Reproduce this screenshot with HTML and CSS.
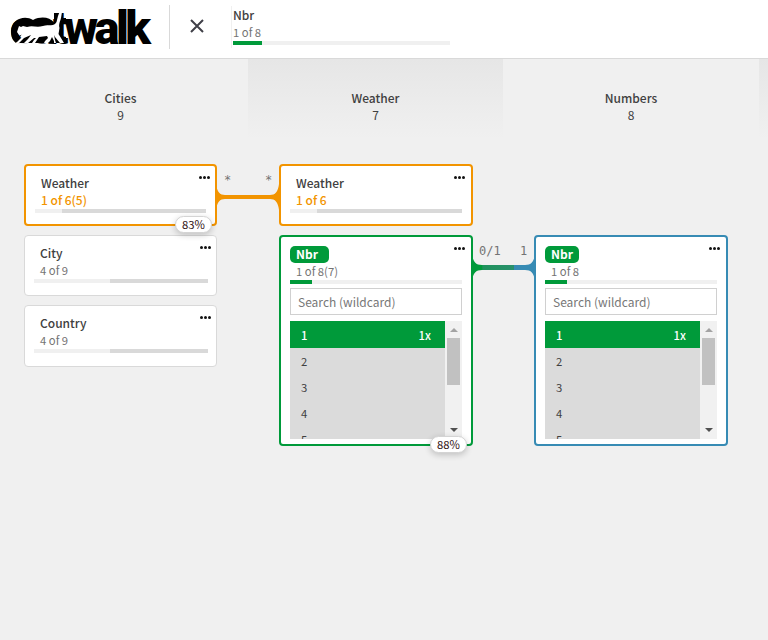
FILE: index.html
```html
<!DOCTYPE html>
<html lang="en">
<head>
<meta charset="utf-8">
<title>catwalk</title>
<link rel="stylesheet" href="styles.css">
</head>
<body>
<header class="topbar">
  <svg class="logo" width="160" height="58" viewBox="0 0 160 58">
    <g class="logo-text">
      <text x="10" y="43.5" textLength="45" lengthAdjust="spacingAndGlyphs">ca</text>
      <text x="53" y="43.5" textLength="13" lengthAdjust="spacingAndGlyphs">t</text>
      <text x="64" y="43.5" textLength="84.5">walk</text>
    </g>
    <path class="ink" d="M11 31C11 20 24 14 33 20C41 16 50 17 54 23L53 28L20 29L17 38L22 34L16 43C12 40 11 36 11 31Z"/>
    <path class="ink" d="M54 13H62V18H66V24H62V36L66 37V43H54Z"/>
    <path class="cat" d="M59.5 12H62L61 18C60 22 58.5 24 59.5 28L58.5 34L61 38L64 43L60 43L55 37L54 35L55 40L56 43L20 44L16 43L22 37L25 34L19 35L17 32L18 29L19 26L21 27L23 26L27 27C33 25 36 28 43 26C49 24 54 27 56.5 22L58 16Z"/>
    <path class="ink" d="M19 43L24 38L31 35L28 39L24 43ZM28 43L34 38H36L34 40L32 43ZM35 43L39 37L47 36L48 38L45 41L44 43ZM48 43L50 41L52 37L54 41V43Z"/>
  </svg>
  <div class="divider"></div>
  <svg class="clear" width="16" height="16" viewBox="0 0 16 16"><path d="M2 2L14 14M14 2L2 14"/></svg>
  <div class="selection">
    <div class="name">Nbr</div>
    <div class="count">1 of 8</div>
    <div class="bar"><i class="sel w29"></i></div>
  </div>
</header>
<main class="columns">
  <section class="column">
    <h2>Cities</h2><p class="total">9</p>
    <div class="cards">
      <article class="card thick orange">
        <span class="dots"><i></i><i></i><i></i></span>
        <div class="name">Weather</div><div class="count">1 of 6(5)</div>
        <div class="bar"><i class="alt from27"></i></div>
        <span class="badge">83%</span>
      </article>
      <article class="card">
        <span class="dots"><i></i><i></i><i></i></span>
        <div class="name">City</div><div class="count">4 of 9</div>
        <div class="bar"><i class="alt from76"></i></div>
      </article>
      <article class="card last">
        <span class="dots"><i></i><i></i><i></i></span>
        <div class="name">Country</div><div class="count">4 of 9</div>
        <div class="bar"><i class="alt from76"></i></div>
      </article>
    </div>
    <svg class="link first" width="64" height="36" viewBox="0 0 64 36">
      <path fill="#f29400" d="M0 6C1 14 4 17 9 17H54C59 17 62 14 63 6V32C62 24 59 21 54 21H9C4 21 1 24 0 32Z"/>
    </svg>
    <span class="card-num n1">*</span><span class="card-num n2">*</span>
  </section>
  <section class="column shade">
    <h2>Weather</h2><p class="total">7</p>
    <div class="cards">
      <article class="card thick orange">
        <span class="dots"><i></i><i></i><i></i></span>
        <div class="name">Weather</div><div class="count">1 of 6</div>
        <div class="bar"><i class="alt from27"></i></div>
      </article>
      <article class="card thick open green">
        <span class="dots"><i></i><i></i><i></i></span>
        <div class="pill">Nbr</div><div class="count">1 of 8(7)</div>
        <div class="bar"><i class="sel w22"></i></div>
        <div class="search">Search (wildcard)</div>
        <div class="listbox">
          <ul><li class="on"><span>1</span><span>1x</span></li><li>2</li><li>3</li><li>4</li><li>5</li></ul>
          <div class="scroll"><b class="up"></b><b class="thumb"></b><b class="down"></b></div>
        </div>
        <span class="badge">88%</span>
      </article>
    </div>
    <svg class="link second" width="64" height="36" viewBox="0 0 64 36">
      <defs><linearGradient id="blend"><stop offset="0" stop-color="#009a3a"/><stop offset=".16" stop-color="#009a3a"/><stop offset=".17" stop-color="#1f925c"/><stop offset=".66" stop-color="#29916c"/><stop offset=".67" stop-color="#378bb4"/><stop offset="1" stop-color="#378bb4"/></linearGradient></defs>
      <path fill="url(#blend)" d="M0 5C1 13 4 16 10 16H53C59 16 62 13 63 5V32C62 24 59 21 53 21H10C4 21 1 24 0 32Z"/>
    </svg>
    <span class="card-num n3">0/1</span><span class="card-num n4">1</span>
  </section>
  <section class="column">
    <h2>Numbers</h2><p class="total">8</p>
    <div class="cards">
      <div class="slot"></div>
      <article class="card thick open blue">
        <span class="dots"><i></i><i></i><i></i></span>
        <div class="pill">Nbr</div><div class="count">1 of 8</div>
        <div class="bar"><i class="sel w22"></i></div>
        <div class="search">Search (wildcard)</div>
        <div class="listbox">
          <ul><li class="on"><span>1</span><span>1x</span></li><li>2</li><li>3</li><li>4</li><li>5</li></ul>
          <div class="scroll"><b class="up"></b><b class="thumb"></b><b class="down"></b></div>
        </div>
      </article>
    </div>
  </section>
  <section class="column shade"></section>
</main>
</body>
</html>
```
FILE: styles.css
```css
* { box-sizing: border-box; }
body {
  margin: 0;
  height: 640px;
  overflow: hidden;
  background: #f0f0f0;
  color: #404040;
  font: 12px/17px "Noto Sans CJK SC", "Open Sans", sans-serif;
}
h2, p, ul { margin: 0; padding: 0; }
i, b { display: block; }

.topbar {
  display: flex;
  height: 59px;
  background: #fff;
  border-bottom: 1px solid #d9d9d9;
}
.logo-text { font: 900 47px Roboto, sans-serif; letter-spacing: -2.5px; }
.ink { fill: #000; }
.cat { fill: #fff; }
.divider { width: 1px; height: 44px; margin: 5px 0 0 9px; background: #d9d9d9; }
.clear { margin: 18px 0 0 18.5px; }
.clear path { stroke: #404048; stroke-width: 2; }
.selection { width: 219px; margin: 6px 0 0 26.5px; padding-left: 1px; height: 42px; border-left: 1px solid #f0f0f0; }
.name { font-weight: 500; }
.selection .count { height: 18px; line-height: 18px; color: #737373; font-size: 11.3px; }

.bar { height: 4px; background: #f0f0f0; }
.bar i { height: 100%; }
.sel { background: #009a3a; }
.alt { background: #d9d9d9; }
.w29 { width: 29px; }
.w22 { width: 22px; }
.from27 { margin-left: 27px; }
.from76 { margin-left: 76px; }

.columns { display: flex; height: 581px; margin-left: -7px; }
.column { position: relative; flex: 0 0 255px; padding-top: 30px; text-align: center; }
.column:nth-child(3) { flex-basis: 256px; }
.column:last-child { flex: 1 1 0; }
.shade { background: linear-gradient(#e6e6e6, #f0f0f0 80px); }
h2 { font-size: 12px; font-weight: 500; line-height: 17px; }
.cards { display: flex; flex-direction: column; gap: 9px; padding: 41px 30px 0 31px; text-align: left; }
.column:nth-child(3) .cards { padding-right: 31px; }
.column:first-child .cards { padding-right: 31px; }
.slot { height: 62px; }
.card {
  position: relative;
  height: 61px;
  padding: 8px 8px 0 9px;
  background: #fff;
  border: 1px solid #d9d9d9;
  border-radius: 4px;
}
.last { height: 62px; }
.card .name, .card .count { padding-left: 6px; }
.card .count { height: 18px; line-height: 18px; font-size: 11.3px; color: #737373; }
.thick { height: 62px; border-width: 2px; border-radius: 4px; }
.thick.orange { padding-right: 9px; }
.orange { border-color: #f29400; }
.card.orange .count { line-height: 17px; color: #f29400; font-weight: 500; font-size: 12px; }
.green { border-color: #009a3a; }
.blue { border-color: #378bb4; }
.card.open { height: 211px; padding: 9px 9px 0; }
.pill {
  width: 39px;
  height: 17px;
  padding-left: 6px;
  background: #009a3a;
  border-radius: 5px;
  color: #fff;
  font-weight: 700;
  line-height: 16px;
}
.card.open .count { height: 17px; line-height: 16px; }
.blue .pill { width: 34px; }
.dots { position: absolute; top: 10px; right: 5px; display: flex; gap: 1px; }
.dots i { width: 3px; height: 3px; border-radius: 50%; background: #111; }
.column:nth-child(n+2) .dots { right: 6px; }
.badge {
  position: absolute;
  right: 4px;
  bottom: -9px;
  width: 37px;
  height: 17px;
  background: #fff;
  border: 1px solid #d4d4d4;
  border-radius: 9px;
  box-shadow: 0 2px 6px rgba(0, 0, 0, .2);
  color: #301010;
  font-size: 11.3px;
  line-height: 15px;
  text-align: center;
  z-index: 2;
}
.column:first-child .badge { right: 3px; }
.search {
  height: 27px;
  margin-top: 4px;
  padding-left: 7px;
  border: 1px solid #d0d0d0;
  color: #777;
  line-height: 25px;
}
.listbox { display: flex; height: 118px; margin-top: 6px; overflow: hidden; }
ul { width: 155px; background: #dbdbdb; list-style: none; font-size: 11.3px; }
li { display: flex; justify-content: space-between; height: 26px; padding: 0 14px 0 11px; line-height: 26px; }
li.on { height: 27px; background: #009a3a; color: #fff; font-weight: 500; line-height: 28px; }
.scroll { display: flex; flex-direction: column; align-items: center; width: 17px; background: #f1f1f1; }
.up { margin-top: 7px; border: 4px solid transparent; border-top: 0; border-bottom: 4px solid #a3a3a3; }
.thumb { width: 13px; height: 47px; margin-top: 6px; background: #c1c1c1; }
.down { margin-top: auto; margin-bottom: 7px; border: 4px solid transparent; border-bottom: 0; border-top: 4px solid #505050; }
.link { position: absolute; left: 223px; z-index: 1; }
.first { top: 119px; }
.second { top: 190px; left: 224px; }
.card-num { position: absolute; color: #737373; font: 12px/14px "DejaVu Sans Mono", monospace; }
.n1 { top: 114px; left: 231px; }
.n2 { top: 114px; left: 272px; z-index: 2; }
.n3 { top: 185px; left: 231px; }
.n4 { top: 185px; left: 272px; z-index: 2; }
```
